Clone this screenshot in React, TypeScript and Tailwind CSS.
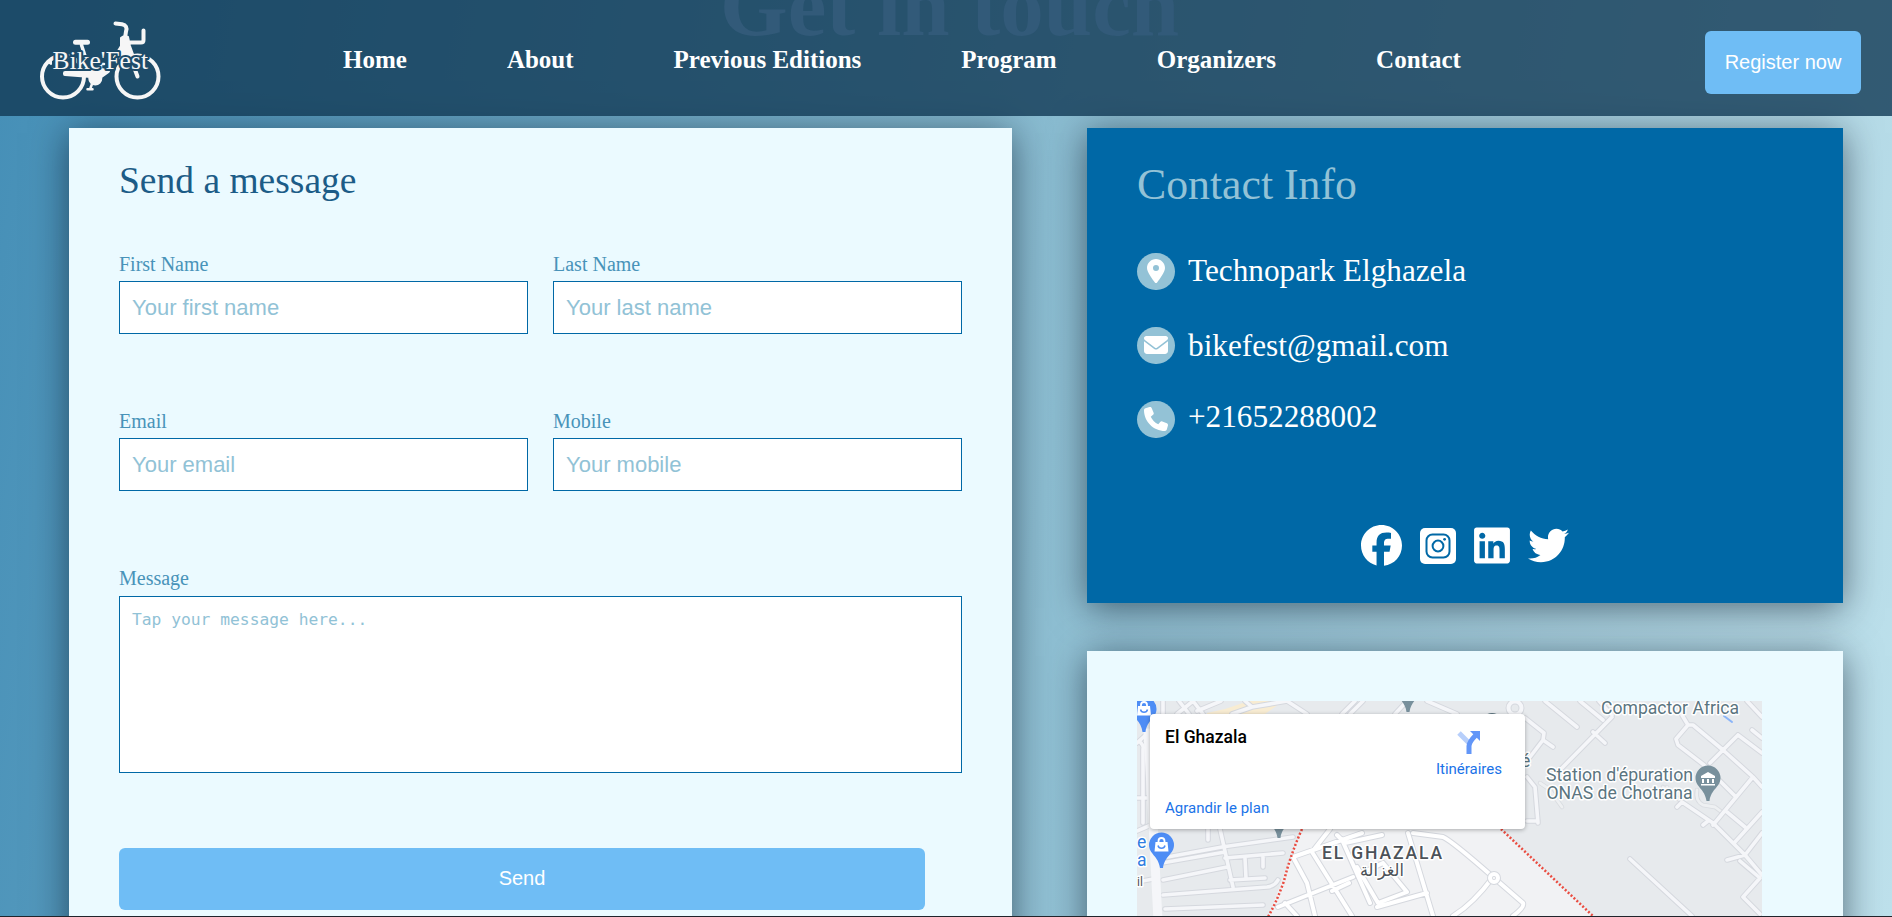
import React from "react";
import { FaLocationDot, FaEnvelope, FaPhone, FaFacebook, FaLinkedin, FaTwitter } from "react-icons/fa6";

const nav = ["Home", "About", "Previous Editions", "Program", "Organizers", "Contact"];

function Logo() {
  return (
    <svg viewBox="0 0 130 90" className="h-[90px] w-[130px]" fill="none" stroke="#f6f6f6" strokeLinecap="round" strokeLinejoin="round">
      <circle cx="28" cy="61.500" r="21" strokeWidth="4" />
      <circle cx="102.500" cy="61.500" r="21" strokeWidth="4" />
      <path d="M40.500 27.300H52.500" strokeWidth="5" />
      <path d="M46.500 30L50 41" strokeWidth="3.500" />
      <path d="M80.500 8.500L87 9.300Q93 10.500 91 16.500L90 23" strokeWidth="4" />
      <path d="M95 27.500H106Q108.500 27.500 108.500 25V15.500" strokeWidth="4" />
      <path d="M86 23Q89 20 93 22L95 31L99 42L78 44L86 31Z" strokeWidth="2" fill="#f6f6f6" />
      <path d="M99 52L102.500 61.500" strokeWidth="4" />
      <path d="M30 58L52 58L65 55L73 56L66 61L56 61L30 59Z" strokeWidth="4" fill="#f6f6f6" />
      <path d="M66 49V56M64 49H69" strokeWidth="2.500" />
      <circle cx="60.300" cy="63.500" r="6" strokeWidth="2" fill="#f6f6f6" />
      <path d="M57 69L55.500 73M52.500 74.300H57.500" strokeWidth="2.500" />
      <path d="M13 47L16 45.500V49Z" strokeWidth="2" fill="#f6f6f6" />
      <text x="17.500" y="54" textLength="95.500" lengthAdjust="spacingAndGlyphs" fontSize="24.500" fontFamily="'Liberation Serif',serif" fill="#f6f6f6" stroke="#1d4b69" strokeWidth="4" paintOrder="stroke">Bike'Fest</text>
    </svg>
  );
}

function InstagramIcon() {
  return (
    <svg viewBox="0 0 36 36" className="size-9">
      <rect width="36" height="36" rx="5" fill="currentColor" />
      <g fill="none" stroke="#0068a6" strokeWidth="2">
        <rect x="6.500" y="6.500" width="23" height="23" rx="6" />
        <circle cx="18" cy="18" r="5.400" />
      </g>
      <circle cx="24.600" cy="11.300" r="1.400" fill="#0068a6" />
    </svg>
  );
}

function Field({ label, placeholder }: { label: string; placeholder: string }) {
  return (
    <label className="flex w-[409px] flex-col text-[20px] leading-[22px] text-[#4893b9]">
      <span className="mb-[6px]">{label}</span>
      <input
        className="h-[53px] w-full border border-[#0068a6] bg-white px-3 font-['Liberation_Sans',Arial,sans-serif] text-[22px] placeholder:text-[#91c2d6] placeholder:opacity-100"
        placeholder={placeholder}
      />
    </label>
  );
}

function Info({ icon, children }: { icon: React.ReactNode; children: React.ReactNode }) {
  return (
    <li className="flex h-[38px] items-center">
      <span className="mr-[13px] flex h-[37px] w-[38px] shrink-0 items-center justify-center rounded-full bg-[#93c2d6] text-2xl text-white">{icon}</span>
      {children}
    </li>
  );
}

function Pin({ x, y, color, children }: { x: number; y: number; color: string; children?: React.ReactNode }) {
  return (
    <g transform={`translate(${x} ${y})`}>
      <path d="M-12.500 -23A12.500 12.500 0 1 1 12.500 -23C12.500 -14 3 -12 1.500 0H-1.500C-3 -12 -12.500 -14 -12.500 -23Z" fill={color} />
      {children}
    </g>
  );
}

const Bag = () => (
  <g>
    <path d="M-6 -26H6L7 -16.500H-7Z" fill="#fff" />
    <path d="M-3 -26V-27A3 3 0 0 1 3 -27V-26" fill="none" stroke="#fff" strokeWidth="1.800" />
    <path d="M-3.500 -22.500A3.600 3.600 0 0 0 3.500 -22.500" fill="none" stroke="#4e8df5" strokeWidth="1.500" />
  </g>
);

const minorRoads =
  "M26 0V13M42 0L52 13M40 13L56 0M56 0L66 13M60 10L84 0M95 13L115 6L108 0M115 6L150 0M150 0L170 13M205 13L218 0M213 13L226 0M258 13L270 0M290 0L320 13M6 122V48Q7 45 4 42M0 42L11 32M0 97H10M0 130L14 124M71 128V139M83 128L96 186M25 157L85 146L156 136M25 162L88 151M26 179L90 166M26 194L130 186Q138 185 141 179M28 208L126 204M88 157L146 152M93 179L128 177M108 157L109 177M126 156V166M0 181L16 178";
const urbanRoads =
  "M156 156L225 132M156 156L170 182L178 215M193 128L175 151L215 215M206 141L233 202M200 134L208 142L245 134M141 206L216 176M160 215L148 202M195 190L212 182M271 132L296 215M276 132L306 136Q315 140 356 176L386 202Q388 206 376 215M356 176Q336 203 316 215M240 206L290 192M246 162L270 191L241 202L220 166M246 162L225 172";
const eastRoads =
  "M545 14L551 24L539 38L541 44L567 64L598 95M551 24H556L586 49L616 76L625 86M601 34L625 52M601 34L573 62M615 29L625 37M615 77L576 124M540 106L545 101L576 122L608 154L625 174M566 124L571 120M590 111L608 126M625 111L598 141M625 132L608 154L590 159M603 160L623 177L606 196L623 213M493 158L555 215M475 16L425 67M443 0L466 19M456 31L468 42M408 0L440 26M388 17L407 32L406 39L393 56M406 39L416 46M390 76L398 86L401 122M390 120H401M610 0L625 16M462 0L475 14";
const faintRoads = "M526 92L530 86M545 101L526 86M560 89Q558 100 566 104L578 106L586 112M403 82L412 88L425 106";

function Roads({ d, w, fill }: { d: string; w: number; fill: string }) {
  return (
    <>
      <path d={d} stroke="#d5d8de" strokeWidth={w + 2} />
      <path d={d} stroke={fill} strokeWidth={w} />
    </>
  );
}

function MapArt() {
  return (
    <svg viewBox="0 0 625 216" className="block h-[216px] w-[625px]" fontFamily="Roboto, sans-serif">
      <rect width="625" height="216" fill="#e7eaed" />
      <path d="M70 12L88 8L112 0H146L128 13H70Z" fill="#f8ecd2" />
      <path d="M165 128L131 216H457L364 128Z" fill="#f1f2f4" />
      <g fill="none" strokeLinecap="round" strokeLinejoin="round">
        <path d={faintRoads} stroke="#d9dce0" strokeWidth="4.500" />
        <path d={faintRoads} stroke="#eef0f2" strokeWidth="2.800" />
        <Roads d={minorRoads} w={3.6} fill="#f5f6f9" />
        <Roads d={eastRoads} w={3.6} fill="#f5f6f9" />
        <Roads d={urbanRoads} w={4} fill="#fff" />
        <path d="M11 32L16 122L21 220" stroke="#f5f6f9" strokeWidth="9" />
        <circle cx="378" cy="7" r="6.500" stroke="#d5d8de" strokeWidth="6" />
        <circle cx="378" cy="7" r="6.500" stroke="#f5f6f9" strokeWidth="4" />
        <circle cx="357" cy="177" r="4" stroke="#d5d8de" strokeWidth="6" />
        <circle cx="357" cy="177" r="4" stroke="#fff" strokeWidth="4" />
        <path d="M165 128Q153 155 147 180Q140 200 131 216M364 128L457 216" stroke="#ea4c40" strokeWidth="2.500" strokeDasharray="2 2" strokeLinecap="butt" />
        <path d="M587 15L595 21" stroke="#8ab4f8" strokeWidth="2" />
      </g>
      <g fill="#5b7580" stroke="#fff" strokeWidth="3" strokeLinejoin="round" paintOrder="stroke" fontSize="17.500">
        <text x="464" y="13" textLength="138" lengthAdjust="spacingAndGlyphs">Compactor Africa</text>
        <text x="409" y="80" textLength="147" lengthAdjust="spacingAndGlyphs">Station d'épuration</text>
        <text x="409.500" y="97.500" textLength="146" lengthAdjust="spacingAndGlyphs">ONAS de Chotrana</text>
        <text x="384" y="66">é</text>
        <text x="0" y="147" fill="#2f7de1">e</text>
        <text x="0" y="164.500" fill="#2f7de1">a</text>
      </g>
      <g fill="#4c5258" stroke="#fff" strokeWidth="3" strokeLinejoin="round" paintOrder="stroke">
        <text x="185" y="158" fontSize="17.500" fontWeight="500" textLength="120">EL GHAZALA</text>
        <text x="245" y="175" fontSize="17" textAnchor="middle" fontFamily="'DejaVu Sans', sans-serif" textLength="44" lengthAdjust="spacingAndGlyphs">الغزالة</text>
        <text x="0" y="185" fontSize="12">il</text>
      </g>
      <Pin x={24.5} y={167} color="#4e8df5"><Bag /></Pin>
      <Pin x={7} y={31} color="#4e8df5"><Bag /></Pin>
      <Pin x={271} y={11} color="#78909c" />
      <Pin x={142} y={137} color="#78909c" />
      <circle cx="355" cy="24" r="12" fill="#5e7681" />
      <Pin x={571} y={100} color="#78909c">
        <path d="M-7 -25L0 -29L7 -25V-23H-7ZM-6 -22H-4V-18H-6ZM-1 -22H1V-18H-1ZM4 -22H6V-18H4ZM-7 -17H7V-15.500H-7Z" fill="#fff" />
      </Pin>
    </svg>
  );
}

export default function App() {
  return (
    <div className="flex h-[917px] flex-col overflow-hidden bg-[linear-gradient(100deg,#458fb7_0%,#8dbed2_55%,#bee1ec_100%)] font-['Liberation_Serif','Times_New_Roman',serif]">
      <header className="relative z-10 flex h-[116px] shrink-0 items-center overflow-hidden bg-[#113955]/80 pl-[35px] pr-[31px]">
        <div className="absolute left-[720px] top-[-44px] -z-10 whitespace-nowrap text-[87px] font-bold leading-[100px] text-[#325a79]">Get in touch</div>
        <div className="mt-1 w-[308px]"><Logo /></div>
        <nav className="mt-1 flex flex-1 gap-[100px] text-[25px] font-bold leading-8 text-white">
          {nav.map((n) => <a key={n} className="whitespace-nowrap">{n}</a>)}
        </nav>
        <button className="mt-[9px] h-[63px] w-[156px] rounded-md bg-[#6fbdf5] pb-[2px] font-['Liberation_Sans',Arial,sans-serif] text-[20px] text-white">Register now</button>
      </header>

      <main className="flex h-[800px] shrink-0 items-start gap-[75px] pl-[69px] pt-3">
        <section className="h-[900px] w-[943px] shrink-0 bg-[#ebfaff] px-[50px] pt-[31px] shadow-[0_5px_35px_rgba(0,12,30,0.55)]">
          <h2 className="h-[94px] text-[37.500px] leading-[44px] text-[#1c5c87]">Send a message</h2>
          <form>
            <div className="flex h-[157px] gap-[25px]">
              <Field label="First Name" placeholder="Your first name" />
              <Field label="Last Name" placeholder="Your last name" />
            </div>
            <div className="flex h-[157px] gap-[25px]">
              <Field label="Email" placeholder="Your email" />
              <Field label="Mobile" placeholder="Your mobile" />
            </div>
            <label className="flex flex-col text-[20px] leading-[22px] text-[#4893b9]">
              <span className="mb-[7px]">Message</span>
              <textarea
                className="h-[177px] resize-none border border-[#0068a6] bg-white px-3 py-[12px] font-['DejaVu_Sans_Mono',monospace] text-[16.300px] leading-[22px] placeholder:text-[#91c2d6] placeholder:opacity-100"
                placeholder="Tap your message here..."
              />
            </label>
            <button type="button" className="mt-[75px] h-[62px] w-[806px] rounded-md bg-[#6fbdf5] pb-[2px] font-['Liberation_Sans',Arial,sans-serif] text-[20px] text-white">Send</button>
          </form>
        </section>

        <div className="flex w-[756px] shrink-0 flex-col gap-12">
          <section className="h-[475px] bg-[#0068a6] px-[50px] pt-[31px] shadow-[0_5px_35px_rgba(0,12,30,0.55)]">
            <h2 className="h-[93px] text-[43.750px] leading-[50px] text-[#93c2d6]">Contact Info</h2>
            <ul className="flex flex-col gap-[36px] text-[31.250px] leading-[36px] text-white">
              <Info icon={<FaLocationDot />}>Technopark Elghazela</Info>
              <Info icon={<FaEnvelope />}><span className="mt-0.5">bikefest@gmail.com</span></Info>
              <Info icon={<FaPhone />}><span className="-mt-1">+21652288002</span></Info>
            </ul>
            <div className="mt-[87px] flex items-center justify-center gap-[18px] text-[41px] text-white">
              <FaFacebook />
              <InstagramIcon />
              <FaLinkedin className="w-9" />
              <FaTwitter />
            </div>
          </section>

          <section className="h-[400px] bg-[#ebfaff] px-[50px] pt-[50px] shadow-[0_5px_35px_rgba(0,12,30,0.55)]">
            <div className="relative w-[625px]">
              <MapArt />
              <div className="absolute left-[13px] top-[13px] flex h-[115px] w-[375px] justify-between rounded-sm bg-white px-[15px] font-['Roboto',sans-serif] shadow-[0_1px_4px_rgba(0,0,0,0.3)]">
                <div className="flex flex-col justify-between pb-[11px] pt-[12px]">
                  <div className="text-[17.500px] font-medium leading-[22px] text-black">El Ghazala</div>
                  <a className="text-[15px] leading-5 text-[#1a73e8]">Agrandir le plan</a>
                </div>
                <div className="mr-2 flex flex-col items-center pt-[16px] text-[15px] text-[#1a73e8]">
                  <svg viewBox="0 0 24 24" className="h-6 w-6" fill="none">
                    <path d="M2 3L12 13" stroke="#b7cffb" strokeWidth="5" />
                    <path d="M12 24V16Q12 12 19 5" stroke="#6296f8" strokeWidth="5" />
                    <path d="M13 1H23V11Z" fill="#6296f8" />
                  </svg>
                  <a className="mt-1">Itinéraires</a>
                </div>
              </div>
            </div>
          </section>
        </div>
      </main>
      <footer className="relative z-10 h-px shrink-0 bg-[#20242b]" />
    </div>
  );
}
